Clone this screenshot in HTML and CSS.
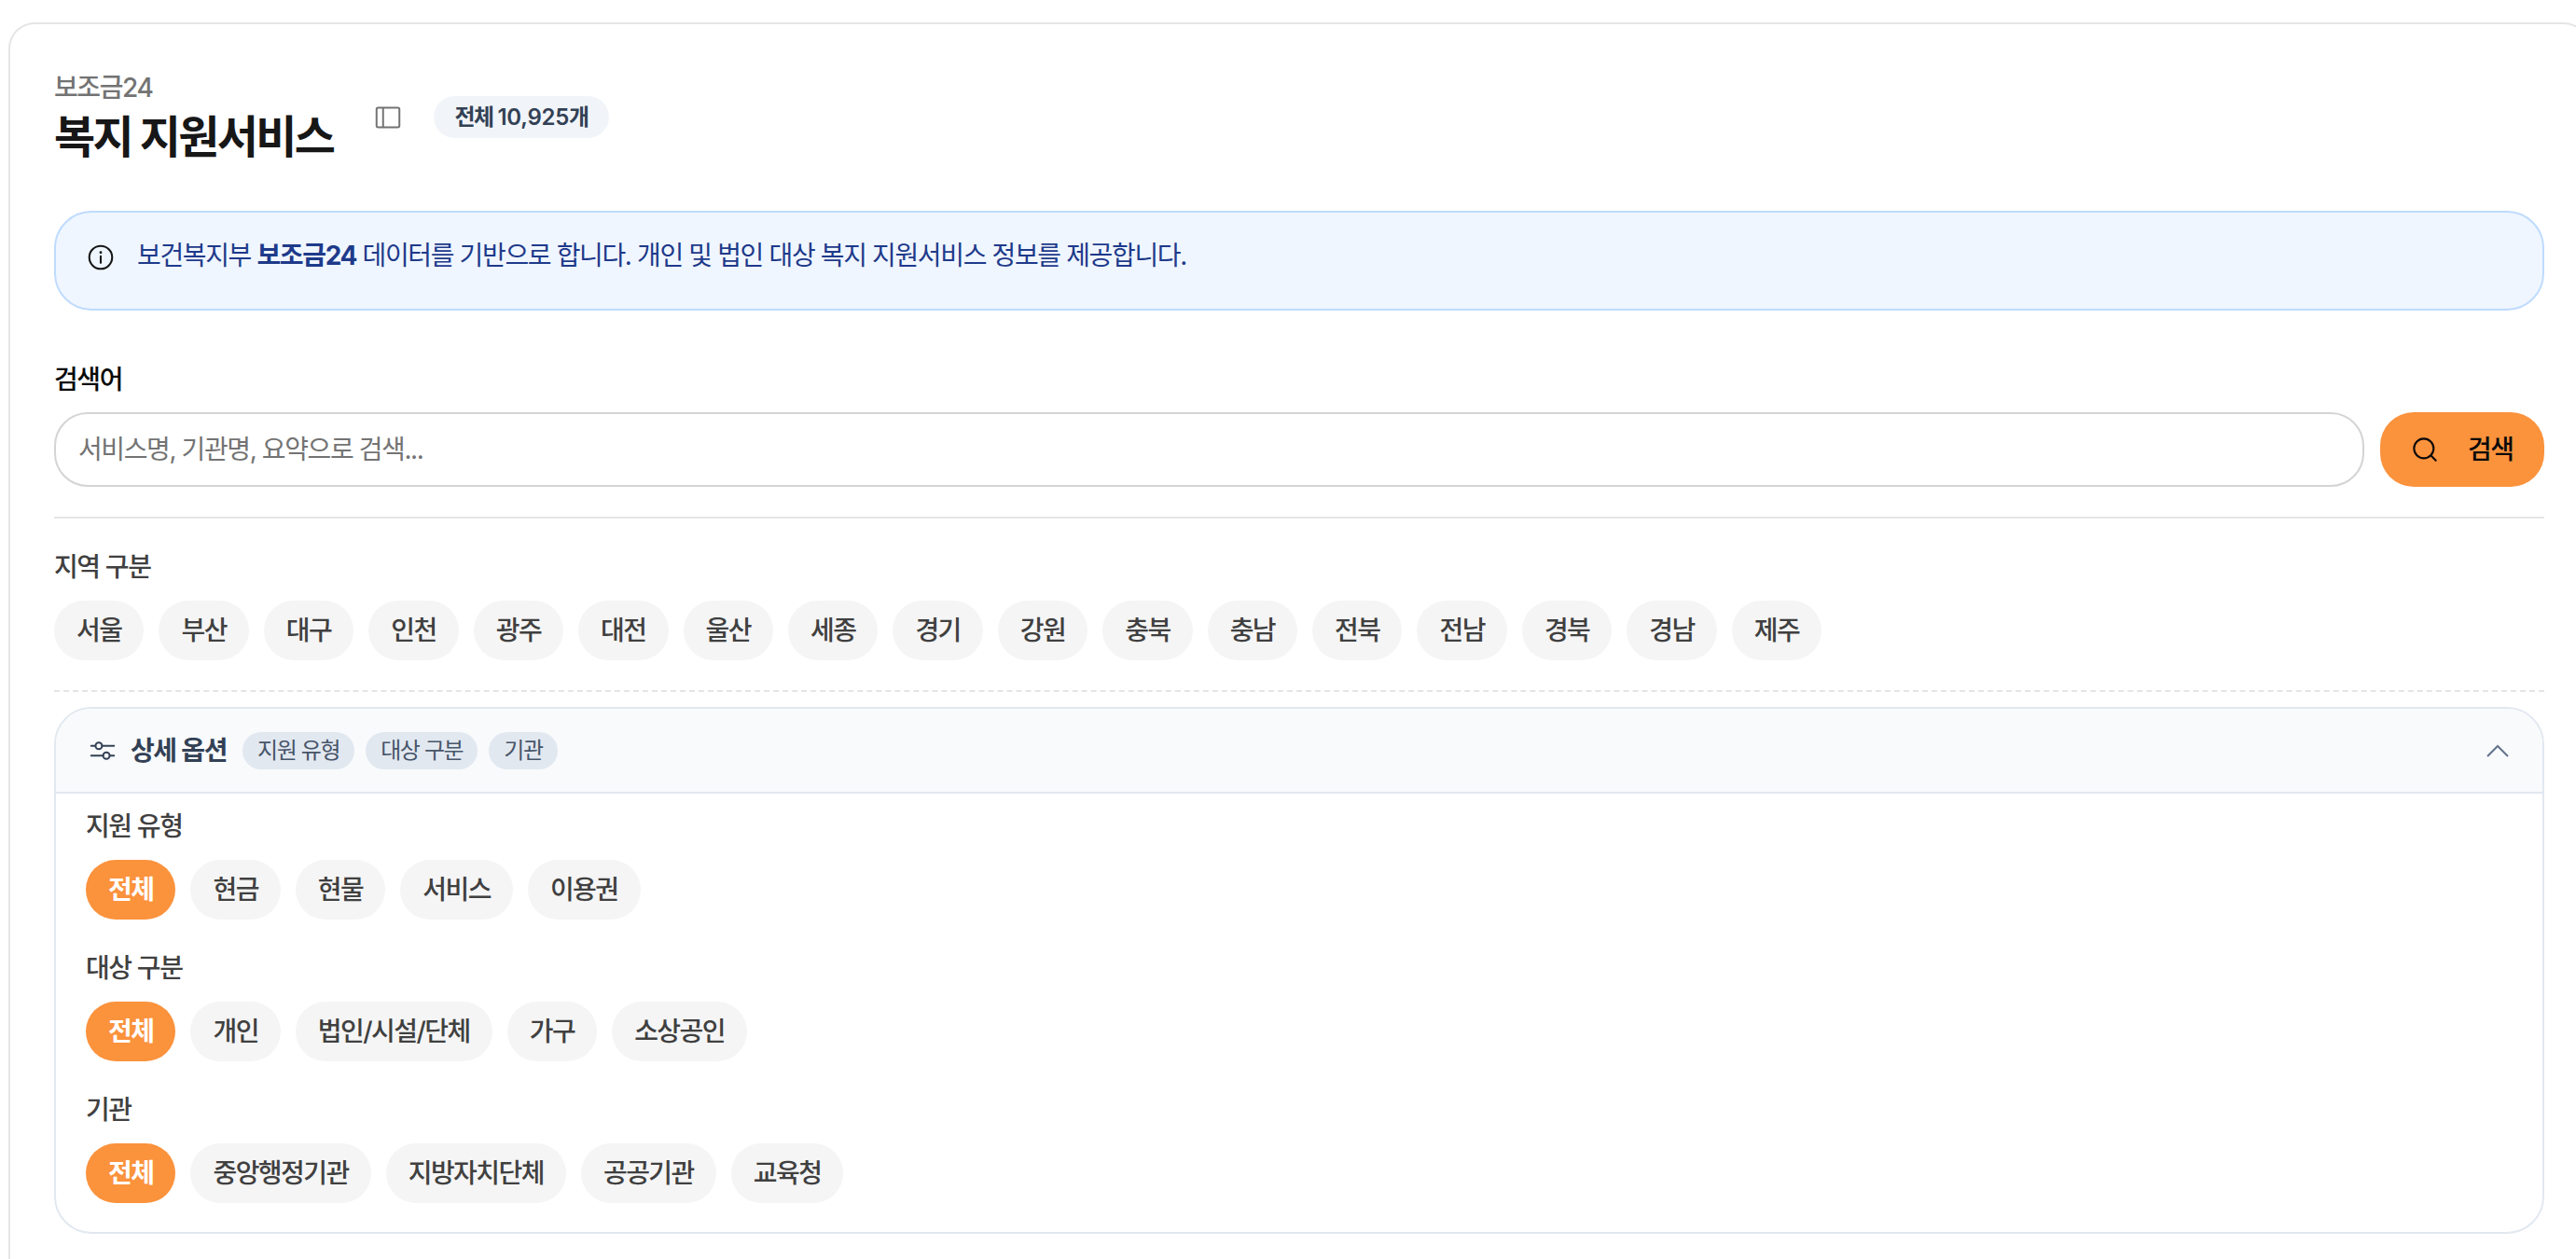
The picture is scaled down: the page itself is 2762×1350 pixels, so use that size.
FILE: index.html
```html
<!DOCTYPE html>
<html lang="ko">
  <head>
    <meta charset="UTF-8" />
    <meta name="viewport" content="width=device-width, initial-scale=1.0"/>
    <title>복지 지원서비스</title>
    <link rel="stylesheet" href="styles.css">
  </head>
  <body>
    <main class="card">

      <!-- 제목 -->
      <header class="page-head">
        <div class="head-text">
          <p class="eyebrow">보조금24</p>
          <h1 class="page-title">복지 지원서비스</h1>
        </div>
        <svg class="icon-sidebar" width="28" height="28" viewBox="0 0 24 24" fill="none" stroke="currentColor" stroke-width="1.7">
          <rect x="1.5" y="3" width="21" height="18" rx="1.5"/>
          <path d="M7.5 3v18"/>
        </svg>
        <span class="count-tag">전체 <span class="num">10,925</span>개</span>
      </header>

      <!-- 안내 -->
      <div class="notice">
        <svg class="icon-info" width="28" height="28" viewBox="0 0 24 24" fill="none" stroke="currentColor" stroke-width="1.8" stroke-linecap="round">
          <circle cx="12" cy="12" r="10.5"/>
          <path d="M12 11v6"/>
          <path d="M12 7.4v.1" stroke-width="2.4"/>
        </svg>
        <p>보건복지부 <strong>보조금24</strong> 데이터를 기반으로 합니다. 개인 및 법인 대상 복지 지원서비스 정보를 제공합니다.</p>
      </div>

      <!-- 검색 -->
      <label class="search-label" for="q">검색어</label>
      <div class="search-row">
        <input class="search-input" id="q" type="text" placeholder="서비스명, 기관명, 요약으로 검색..." />
        <button class="search-btn">
          <svg width="28" height="28" viewBox="0 0 24 24" fill="none" stroke="currentColor" stroke-width="1.8" stroke-linecap="round">
            <circle cx="11" cy="11" r="9"/>
            <path d="M17.6 17.6l4.4 4.4"/>
          </svg>
          <span>검색</span>
        </button>
      </div>

      <div class="region">
        <p class="group-label">지역 구분</p>
        <div class="pills">
          <span class="pill">서울</span>
          <span class="pill">부산</span>
          <span class="pill">대구</span>
          <span class="pill">인천</span>
          <span class="pill">광주</span>
          <span class="pill">대전</span>
          <span class="pill">울산</span>
          <span class="pill">세종</span>
          <span class="pill">경기</span>
          <span class="pill">강원</span>
          <span class="pill">충북</span>
          <span class="pill">충남</span>
          <span class="pill">전북</span>
          <span class="pill">전남</span>
          <span class="pill">경북</span>
          <span class="pill">경남</span>
          <span class="pill">제주</span>
        </div>
      </div>

      <!-- 상세 옵션 -->
      <section class="options">
        <div class="options-head">
          <svg class="icon-sliders" width="28" height="28" viewBox="0 0 24 24" fill="none" stroke="currentColor" stroke-width="1.7" stroke-linecap="round">
            <path d="M1.5 7.5h4M11.5 7.5h11"/>
            <circle cx="8.5" cy="7.5" r="3"/>
            <path d="M1.5 16.5h11M18.5 16.5h4"/>
            <circle cx="15.5" cy="16.5" r="3"/>
          </svg>
          <strong class="options-title">상세 옵션</strong>
          <span class="tag">지원 유형</span>
          <span class="tag">대상 구분</span>
          <span class="tag">기관</span>
          <svg class="icon-chevron" width="24" height="14" viewBox="0 0 24 14" fill="none" stroke="currentColor" stroke-width="2">
            <path d="M1 13L12 2l11 11"/>
          </svg>
        </div>
        <div class="options-body">
          <div class="group">
            <p class="group-label">지원 유형</p>
            <div class="pills">
              <span class="pill active">전체</span>
              <span class="pill">현금</span>
              <span class="pill">현물</span>
              <span class="pill">서비스</span>
              <span class="pill">이용권</span>
            </div>
          </div>
          <div class="group">
            <p class="group-label">대상 구분</p>
            <div class="pills">
              <span class="pill active">전체</span>
              <span class="pill">개인</span>
              <span class="pill">법인/시설/단체</span>
              <span class="pill">가구</span>
              <span class="pill">소상공인</span>
            </div>
          </div>
          <div class="group">
            <p class="group-label">기관</p>
            <div class="pills">
              <span class="pill active">전체</span>
              <span class="pill">중앙행정기관</span>
              <span class="pill">지방자치단체</span>
              <span class="pill">공공기관</span>
              <span class="pill">교육청</span>
            </div>
          </div>
        </div>
      </section>

    </main>
  </body>
</html>
```

FILE: styles.css
```css
* {
  box-sizing: border-box;
}

html, body {
  height: 100%;
}

body {
  margin: 0;
  overflow: hidden;
  background-color: #ffffff;
  color: #171717;
  font-family: Inter, "Noto Sans CJK KR", sans-serif;
  font-size: 28px;
  line-height: 40px;
  letter-spacing: -0.05em;
}

p, h1 {
  margin: 0;
}

/* 오른쪽은 화면 밖으로 조금 나간다 */
.card {
  margin: 24px -15px 0 9px;
  height: calc(100vh - 24px);
  padding: 48px 47px 0;
  border: 2px solid #e5e5e5;
  border-bottom: none;
  border-radius: 28px 28px 0 0;
}

.page-head {
  display: flex;
  align-items: flex-start;
  height: 152px;
}

.eyebrow {
  color: #737373;
  font-weight: 500;
}

.page-title {
  margin-top: 3px;
  font-size: 48px;
  line-height: 60px;
  font-weight: 700;
  letter-spacing: -0.055em;
}

.icon-sidebar {
  margin: 38px 0 0 45px;
  color: #737373;
}

.count-tag {
  margin: 29px 0 0 35px;
  padding: 0 22px;
  height: 45px;
  line-height: 45px;
  border-radius: 23px;
  background-color: #f1f5f9;
  color: #334155;
  font-size: 24px;
  font-weight: 600;
}

.num {
  letter-spacing: -0.01em;
}

.notice {
  display: flex;
  align-items: flex-start;
  gap: 25px;
  height: 107px;
  padding: 26px 34px 0;
  border: 2px solid #bfdbfe;
  border-radius: 40px;
  background-color: #eff6ff;
  color: #1e3a8a;
  letter-spacing: -1.37px;
}

.icon-info {
  margin-top: 8px;
  color: #171717;
  flex: none;
}

.notice strong {
  font-weight: 700;
}

.search-label {
  display: block;
  margin-top: 54px;
  font-weight: 500;
  color: #0a0a0a;
}

.search-row {
  display: flex;
  gap: 17px;
  margin-top: 15px;
  padding-bottom: 32px;
  border-bottom: 2px solid #e5e5e5;
}

.search-input {
  flex: 1;
  height: 80px;
  padding: 0 24px;
  border: 2px solid #d4d4d4;
  border-radius: 36px;
  background: #ffffff;
  font: inherit;
  letter-spacing: inherit;
  outline: none;
}

.search-input::placeholder {
  color: #737373;
}

.search-btn {
  display: flex;
  align-items: center;
  gap: 32px;
  width: 176px;
  height: 80px;
  padding: 0 0 0 34px;
  border: none;
  border-radius: 36px;
  background-color: #fb923c;
  color: #0a0a0a;
  font: inherit;
  font-weight: 500;
  letter-spacing: inherit;
}

.region {
  padding: 32px 0 32px;
  border-bottom: 2px dashed #e5e5e5;
}

.group-label {
  margin-bottom: 16px;
  color: #404040;
  font-weight: 500;
}

.pills {
  display: flex;
  gap: 16px;
}

.pill {
  height: 64px;
  padding: 0 24px;
  line-height: 64px;
  border-radius: 32px;
  background-color: #f5f5f5;
  color: #404040;
  font-weight: 500;
  letter-spacing: -1.55px;
}

.pill.active {
  background-color: #fb923c;
  color: #ffffff;
  font-weight: 600;
}

.options {
  margin-top: 16px;
  height: 565px;
  border: 2px solid #e2e8f0;
  border-radius: 40px;
  overflow: hidden;
}

.options-head {
  display: flex;
  align-items: center;
  gap: 12px;
  height: 91px;
  padding: 0 36px;
  border-bottom: 2px solid #e2e8f0;
  background-color: #f8fafc;
}

.icon-sliders {
  color: #334155;
  margin-right: 4px;
}

.options-title {
  margin-right: 5px;
  color: #334155;
  font-weight: 600;
}

.tag {
  height: 40px;
  padding: 0 16px;
  line-height: 40px;
  border-radius: 20px;
  background-color: #e2e8f0;
  color: #475569;
  font-size: 24px;
}

.icon-chevron {
  margin-left: auto;
  color: #64748b;
}

.options-body {
  padding: 15px 32px 0;
}

.group {
  margin-bottom: 32px;
}
```
